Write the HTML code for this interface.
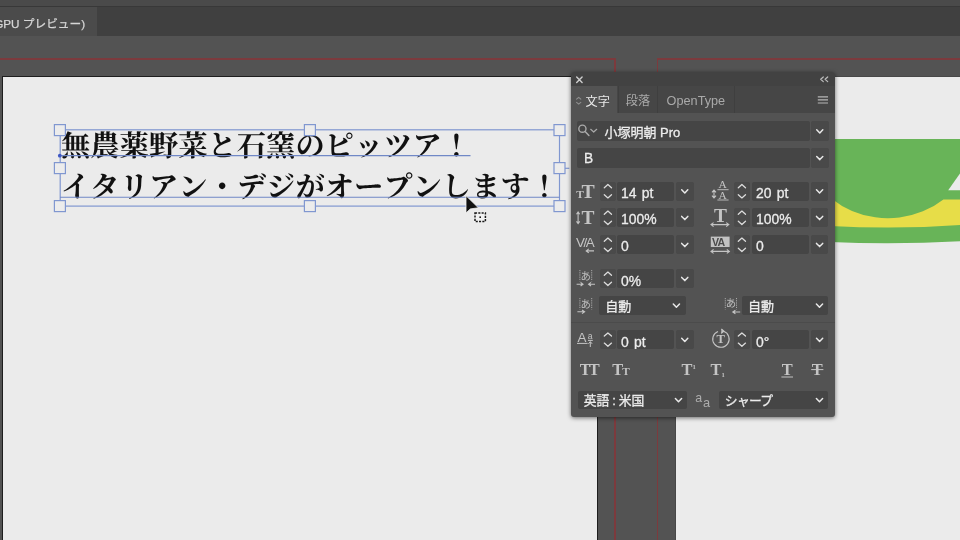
<!DOCTYPE html>
<html lang="ja">
<head>
<meta charset="utf-8">
<title>Illustrator</title>
<style>
html,body{margin:0;padding:0;}
body{width:960px;height:540px;overflow:hidden;position:relative;background:#535353;
  font-family:"Liberation Sans","Noto Sans CJK JP","Noto Sans CJK SC",sans-serif;}
.abs{position:absolute;}
#wrap{position:absolute;left:0;top:0;width:960px;height:540px;will-change:transform;}
svg{position:absolute;overflow:visible;}
/* top bars */
#topstrip{left:0;top:0;width:960px;height:7px;background:#4a4a4a;border-bottom:1px solid #383838;box-sizing:border-box;}
#tabbar{left:0;top:7px;width:960px;height:29px;background:#404040;}
#tab{left:0;top:7px;width:97px;height:29px;background:#4b4b4b;color:#d6d6d6;font-size:11.7px;line-height:33px;white-space:nowrap;overflow:hidden;}
#tab span{position:absolute;left:-5.8px;top:0;-webkit-text-stroke:0.25px #d6d6d6;}
/* artboards */
.art{background:#ebebeb;border:1.6px solid #1e1e1e;box-sizing:border-box;}
#art1{left:2px;top:76px;width:596px;height:470px;}
#art2{left:675px;top:75.6px;width:300px;height:470px;border:1px solid #484848;}
.red{background:#7c3a3d;}
/* text */
.txt{color:#111;font-family:"Liberation Serif","Noto Serif CJK JP","Noto Serif CJK SC",serif;font-weight:700;
  font-size:29.3px;line-height:42px;white-space:nowrap;letter-spacing:0;text-rendering:geometricPrecision;font-kerning:none;font-feature-settings:"kern" 0,"palt" 0;}
.bl{background:#6f8fd8;}
.hd{width:11px;height:11px;border:1px solid #5f82d2;background:#ebebeb;box-sizing:border-box;}
/* panel */
#panel{left:571px;top:72px;width:264px;height:344.5px;background:#535353;border-radius:3px;box-shadow:0 1px 4px rgba(0,0,0,.55);overflow:hidden;}
#panel *{box-sizing:border-box;}
#ptitle{left:0;top:0;width:264px;height:14px;background:#424242;}
#ptabs{left:0;top:14px;width:264px;height:27px;background:#464646;}
.ptab{top:14px;height:27px;font-size:12.2px;line-height:31px;color:#a9a9a9;white-space:nowrap;}
#pt1{left:0;width:46px;background:#535353;color:#eaeaea;}
#pt2{left:47px;width:40px;border-left:1px solid #3f3f3f;border-right:1px solid #3f3f3f;}
#pt3{left:87px;width:77px;border-right:1px solid #3f3f3f;}
.fld{background:#454545;border-radius:2px;color:#ececec;white-space:nowrap;overflow:hidden;}
.ft{position:absolute;white-space:nowrap;transform-origin:0 50%;-webkit-text-stroke:0.3px #ececec;}
.dd{background:#494949;border-radius:2px;}
.sp{background:#4a4a4a;border-radius:2px;}
.ic{color:#bdbdbd;}
</style>
</head>
<body>
<div id="wrap">
<div id="topstrip" class="abs"></div>
<div id="tabbar" class="abs"></div>
<div id="tab" class="abs"><span>GPU プレビュー)</span></div>

<!-- red bleed guides -->
<div class="abs red" style="left:0;top:58px;width:616px;height:2px;"></div>
<div class="abs red" style="left:614.2px;top:58px;width:1.6px;height:490px;"></div>
<div class="abs red" style="left:656.6px;top:58px;width:304px;height:2px;"></div>
<div class="abs red" style="left:656.6px;top:58px;width:1.6px;height:490px;"></div>

<div id="art1" class="abs art"></div>
<div id="art2" class="abs art"></div>

<!-- cup artwork on right artboard -->
<svg class="abs" style="left:0;top:0" width="960" height="540" viewBox="0 0 960 540">
  <path d="M830 190 H960 V241.2 Q897 244.9 830 242.1 Z" fill="#68b458"/>
  <path d="M830 190 H960 V225 Q897 229.6 830 226 Z" fill="#e7dd48"/>
  <path d="M802.5 139 H960 V199.4 H943.4 A85.5 79 0 0 1 802.5 139 Z" fill="#68b458"/>
  <path d="M948.2 190.2 L960.5 172.8 V190.2 Z" fill="#ebebeb"/>
</svg>

<div class="abs txt" style="left:61px;top:126px;">無農薬野菜と石窯のピッツア！</div>
<div class="abs txt" style="left:61px;top:167px;">イタリアン・デジがオープンします！</div>

<!-- selection -->
<svg class="abs" style="left:0;top:0" width="960" height="540" viewBox="0 0 960 540">
  <g fill="none" stroke="#8097d0" stroke-width="1.2">
    <rect x="60.2" y="129.8" width="499.3" height="76.3"/>
    <path d="M60 155.6 H470.5 M60 197.2 H559.5" stroke="#7088c6" stroke-width="1.1"/>
    <path d="M560 168.3 H569.3"/>
  </g>
  <circle cx="59.8" cy="155.7" r="1.9" fill="#3f58c4"/>
  <g fill="#ececec" stroke="#8097d0" stroke-width="1.2">
    <rect x="54.4" y="124.6" width="11" height="11"/>
    <rect x="304.4" y="124.6" width="11" height="11"/>
    <rect x="554" y="124.6" width="11" height="11"/>
    <rect x="54.4" y="162.6" width="11" height="11"/>
    <rect x="554" y="162.6" width="11" height="11"/>
    <rect x="54.4" y="200.6" width="11" height="11"/>
    <rect x="304.4" y="200.6" width="11" height="11"/>
    <rect x="554" y="200.6" width="11" height="11"/>
  </g>
  <!-- cursor -->
  <path d="M466 195.7 V212.9 L470.3 208.9 L478.4 207.8 Z" fill="#111" stroke="#f4f4f4" stroke-width="0.8" stroke-linejoin="round"/>
  <rect x="474.6" y="212.6" width="11" height="9" fill="#f2f2f2" stroke="#f2f2f2" stroke-width="1.6"/>
  <rect x="475" y="213" width="10.4" height="8.4" fill="none" stroke="#1a1a1a" stroke-width="1.5" stroke-dasharray="2.1 1.2"/>
  <rect x="479.4" y="216.4" width="1.6" height="1.6" fill="#1a1a1a"/>
</svg>

<div id="panel" class="abs">
<div id="ptitle" class="abs"></div><div id="ptabs" class="abs"></div>
<div id="pt1" class="abs ptab"><span class="abs" style="left:14.6px;top:0.5px">文字</span></div>
<div id="pt2" class="abs ptab"><span class="abs" style="left:6.8px">段落</span></div>
<div id="pt3" class="abs ptab"><span class="abs" style="left:8.6px;font-size:12.7px">OpenType</span></div>
<div class="abs fld" style="left:6px;top:49.3px;width:233px;height:19.5px;"><span class="ft" style="left:27.5px;top:1.6px;line-height:19.5px;font-size:13px;">小塚明朝 Pro</span></div>
<div class="abs dd" style="left:240px;top:49.3px;height:19.5px;width:17.5px"></div><svg class="abs" style="left:0;top:0" width="1" height="1"><path d="M245.7 57.7 L248.8 60.9 L251.8 57.7" fill="none" stroke="#e8e8e8" stroke-width="1.5" stroke-linecap="round" stroke-linejoin="round"/></svg>
<div class="abs fld" style="left:6px;top:76px;width:233px;height:19.5px;"><span class="ft" style="left:7px;top:1.2px;line-height:19.5px;font-size:14.6px;transform:scaleX(0.94);">B</span></div>
<div class="abs dd" style="left:240px;top:76px;height:19.5px;width:17.5px"></div><svg class="abs" style="left:0;top:0" width="1" height="1"><path d="M245.7 84.5 L248.8 87.6 L251.8 84.5" fill="none" stroke="#e8e8e8" stroke-width="1.5" stroke-linecap="round" stroke-linejoin="round"/></svg>
<div class="abs sp" style="left:29.2px;top:109.6px;height:19px;width:15.8px"></div><svg class="abs" style="left:0;top:0" width="1" height="1"><path d="M33.3 115.7 L36.9 112.5 L40.5 115.7 M33.3 122.7 L36.9 125.9 L40.5 122.7" fill="none" stroke="#dcdcdc" stroke-width="1.3" stroke-linecap="round" stroke-linejoin="round"/></svg><div class="abs fld" style="left:46.3px;top:109.6px;width:57px;height:19px;word-spacing:1.5px;"><span class="ft" style="left:4px;top:2.2px;line-height:19px;font-size:14.8px;transform:scaleX(0.94);">14 pt</span></div><div class="abs dd" style="left:105px;top:109.6px;height:19px;width:17.5px"></div><svg class="abs" style="left:0;top:0" width="1" height="1"><path d="M110.7 117.8 L113.8 121.0 L116.8 117.8" fill="none" stroke="#e8e8e8" stroke-width="1.5" stroke-linecap="round" stroke-linejoin="round"/></svg><div class="abs sp" style="left:163.2px;top:109.6px;height:19px;width:15.8px"></div><svg class="abs" style="left:0;top:0" width="1" height="1"><path d="M167.3 115.7 L170.9 112.5 L174.5 115.7 M167.3 122.7 L170.9 125.9 L174.5 122.7" fill="none" stroke="#dcdcdc" stroke-width="1.3" stroke-linecap="round" stroke-linejoin="round"/></svg><div class="abs fld" style="left:181.2px;top:109.6px;width:57px;height:19px;word-spacing:1.5px;"><span class="ft" style="left:3.5px;top:2.2px;line-height:19px;font-size:14.8px;transform:scaleX(0.94);">20 pt</span></div><div class="abs dd" style="left:239.8px;top:109.6px;height:19px;width:17.5px"></div><svg class="abs" style="left:0;top:0" width="1" height="1"><path d="M245.5 117.8 L248.6 121.0 L251.7 117.8" fill="none" stroke="#e8e8e8" stroke-width="1.5" stroke-linecap="round" stroke-linejoin="round"/></svg>
<div class="abs sp" style="left:29.2px;top:136.2px;height:19px;width:15.8px"></div><svg class="abs" style="left:0;top:0" width="1" height="1"><path d="M33.3 142.3 L36.9 139.1 L40.5 142.3 M33.3 149.3 L36.9 152.5 L40.5 149.3" fill="none" stroke="#dcdcdc" stroke-width="1.3" stroke-linecap="round" stroke-linejoin="round"/></svg><div class="abs fld" style="left:46.3px;top:136.2px;width:57px;height:19px;word-spacing:1.5px;"><span class="ft" style="left:4px;top:2.1px;line-height:19px;font-size:14.8px;transform:scaleX(0.94);">100%</span></div><div class="abs dd" style="left:105px;top:136.2px;height:19px;width:17.5px"></div><svg class="abs" style="left:0;top:0" width="1" height="1"><path d="M110.7 144.4 L113.8 147.6 L116.8 144.4" fill="none" stroke="#e8e8e8" stroke-width="1.5" stroke-linecap="round" stroke-linejoin="round"/></svg><div class="abs sp" style="left:163.2px;top:136.2px;height:19px;width:15.8px"></div><svg class="abs" style="left:0;top:0" width="1" height="1"><path d="M167.3 142.3 L170.9 139.1 L174.5 142.3 M167.3 149.3 L170.9 152.5 L174.5 149.3" fill="none" stroke="#dcdcdc" stroke-width="1.3" stroke-linecap="round" stroke-linejoin="round"/></svg><div class="abs fld" style="left:181.2px;top:136.2px;width:57px;height:19px;word-spacing:1.5px;"><span class="ft" style="left:3.5px;top:2.1px;line-height:19px;font-size:14.8px;transform:scaleX(0.94);">100%</span></div><div class="abs dd" style="left:239.8px;top:136.2px;height:19px;width:17.5px"></div><svg class="abs" style="left:0;top:0" width="1" height="1"><path d="M245.5 144.4 L248.6 147.6 L251.7 144.4" fill="none" stroke="#e8e8e8" stroke-width="1.5" stroke-linecap="round" stroke-linejoin="round"/></svg>
<div class="abs sp" style="left:29.2px;top:163.2px;height:19px;width:15.8px"></div><svg class="abs" style="left:0;top:0" width="1" height="1"><path d="M33.3 169.3 L36.9 166.1 L40.5 169.3 M33.3 176.3 L36.9 179.5 L40.5 176.3" fill="none" stroke="#dcdcdc" stroke-width="1.3" stroke-linecap="round" stroke-linejoin="round"/></svg><div class="abs fld" style="left:46.3px;top:163.2px;width:57px;height:19px;word-spacing:1.5px;"><span class="ft" style="left:4px;top:1.8px;line-height:19px;font-size:14.8px;transform:scaleX(0.94);">0</span></div><div class="abs dd" style="left:105px;top:163.2px;height:19px;width:17.5px"></div><svg class="abs" style="left:0;top:0" width="1" height="1"><path d="M110.7 171.4 L113.8 174.6 L116.8 171.4" fill="none" stroke="#e8e8e8" stroke-width="1.5" stroke-linecap="round" stroke-linejoin="round"/></svg><div class="abs sp" style="left:163.2px;top:163.2px;height:19px;width:15.8px"></div><svg class="abs" style="left:0;top:0" width="1" height="1"><path d="M167.3 169.3 L170.9 166.1 L174.5 169.3 M167.3 176.3 L170.9 179.5 L174.5 176.3" fill="none" stroke="#dcdcdc" stroke-width="1.3" stroke-linecap="round" stroke-linejoin="round"/></svg><div class="abs fld" style="left:181.2px;top:163.2px;width:57px;height:19px;word-spacing:1.5px;"><span class="ft" style="left:3.5px;top:1.8px;line-height:19px;font-size:14.8px;transform:scaleX(0.94);">0</span></div><div class="abs dd" style="left:239.8px;top:163.2px;height:19px;width:17.5px"></div><svg class="abs" style="left:0;top:0" width="1" height="1"><path d="M245.5 171.4 L248.6 174.6 L251.7 171.4" fill="none" stroke="#e8e8e8" stroke-width="1.5" stroke-linecap="round" stroke-linejoin="round"/></svg>
<div class="abs sp" style="left:29.2px;top:197.2px;height:19px;width:15.8px"></div><svg class="abs" style="left:0;top:0" width="1" height="1"><path d="M33.3 203.3 L36.9 200.1 L40.5 203.3 M33.3 210.3 L36.9 213.5 L40.5 210.3" fill="none" stroke="#dcdcdc" stroke-width="1.3" stroke-linecap="round" stroke-linejoin="round"/></svg><div class="abs fld" style="left:46.3px;top:197.2px;width:57px;height:19px;word-spacing:1.5px;"><span class="ft" style="left:4px;top:3.3px;line-height:19px;font-size:14.8px;transform:scaleX(0.94);">0%</span></div><div class="abs dd" style="left:105px;top:197.2px;height:19px;width:17.5px"></div><svg class="abs" style="left:0;top:0" width="1" height="1"><path d="M110.7 205.4 L113.8 208.6 L116.8 205.4" fill="none" stroke="#e8e8e8" stroke-width="1.5" stroke-linecap="round" stroke-linejoin="round"/></svg>
<div class="abs fld" style="left:28.4px;top:224px;width:86.7px;height:19px;"><span class="ft" style="left:5.8px;top:0.9px;line-height:19px;font-size:13px;">自動</span></div><svg class="abs" style="left:0;top:0" width="1" height="1"><path d="M102.3 232.0 L105.4 235.2 L108.5 232.0" fill="none" stroke="#e8e8e8" stroke-width="1.5" stroke-linecap="round" stroke-linejoin="round"/></svg>
<div class="abs fld" style="left:170.7px;top:224px;width:86.6px;height:19px;"><span class="ft" style="left:6.3px;top:0.9px;line-height:19px;font-size:13px;">自動</span></div><svg class="abs" style="left:0;top:0" width="1" height="1"><path d="M245.4 232.0 L248.5 235.2 L251.6 232.0" fill="none" stroke="#e8e8e8" stroke-width="1.5" stroke-linecap="round" stroke-linejoin="round"/></svg>
<div class="abs sp" style="left:29.2px;top:258px;height:19px;width:15.8px"></div><svg class="abs" style="left:0;top:0" width="1" height="1"><path d="M33.3 264.1 L36.9 260.9 L40.5 264.1 M33.3 271.1 L36.9 274.3 L40.5 271.1" fill="none" stroke="#dcdcdc" stroke-width="1.3" stroke-linecap="round" stroke-linejoin="round"/></svg><div class="abs fld" style="left:46.3px;top:258px;width:57px;height:19px;word-spacing:1.5px;"><span class="ft" style="left:4px;top:3.2px;line-height:19px;font-size:14.8px;transform:scaleX(0.94);">0 pt</span></div><div class="abs dd" style="left:105px;top:258px;height:19px;width:17.5px"></div><svg class="abs" style="left:0;top:0" width="1" height="1"><path d="M110.7 266.2 L113.8 269.4 L116.8 266.2" fill="none" stroke="#e8e8e8" stroke-width="1.5" stroke-linecap="round" stroke-linejoin="round"/></svg><div class="abs sp" style="left:163.2px;top:258px;height:19px;width:15.8px"></div><svg class="abs" style="left:0;top:0" width="1" height="1"><path d="M167.3 264.1 L170.9 260.9 L174.5 264.1 M167.3 271.1 L170.9 274.3 L174.5 271.1" fill="none" stroke="#dcdcdc" stroke-width="1.3" stroke-linecap="round" stroke-linejoin="round"/></svg><div class="abs fld" style="left:181.2px;top:258px;width:57px;height:19px;word-spacing:1.5px;"><span class="ft" style="left:3.5px;top:3.2px;line-height:19px;font-size:14.8px;transform:scaleX(0.94);">0°</span></div><div class="abs dd" style="left:239.8px;top:258px;height:19px;width:17.5px"></div><svg class="abs" style="left:0;top:0" width="1" height="1"><path d="M245.5 266.2 L248.6 269.4 L251.7 266.2" fill="none" stroke="#e8e8e8" stroke-width="1.5" stroke-linecap="round" stroke-linejoin="round"/></svg>
<div class="abs fld" style="left:6.7px;top:318.8px;width:109px;height:18.5px;word-spacing:-0.6px;"><span class="ft" style="left:6px;top:1.6px;line-height:18.5px;font-size:12.8px;">英語 : 米国</span></div><svg class="abs" style="left:0;top:0" width="1" height="1"><path d="M104.4 326.6 L107.5 329.8 L110.6 326.6" fill="none" stroke="#e8e8e8" stroke-width="1.5" stroke-linecap="round" stroke-linejoin="round"/></svg>
<div class="abs fld" style="left:148.2px;top:318.8px;width:109px;height:18.5px;letter-spacing:-0.7px;"><span class="ft" style="left:5.6px;top:1.2px;line-height:18.5px;font-size:12.8px;">シャープ</span></div><svg class="abs" style="left:0;top:0" width="1" height="1"><path d="M245.4 326.6 L248.5 329.8 L251.6 326.6" fill="none" stroke="#e8e8e8" stroke-width="1.5" stroke-linecap="round" stroke-linejoin="round"/></svg>
<svg class="abs" id="picons" style="left:0;top:0" width="264" height="344" viewBox="0 0 264 344">
<g fill="none" stroke-linecap="round" stroke-linejoin="round">
  <!-- close x -->
  <path d="M5.7 5.1 L11.1 10.5 M11.1 5.1 L5.7 10.5" stroke="#cfcfcf" stroke-width="1.4"/>
  <!-- collapse << -->
  <path d="M252.3 5 L249.7 7.3 L252.3 9.6 M256.7 5 L254.1 7.3 L256.7 9.6" stroke="#bdbdbd" stroke-width="1.2"/>
  <!-- tab cycle arrows -->
  <path d="M5.6 27.1 L7.7 25.3 L9.8 27.1 M5.6 30.3 L7.7 32.1 L9.8 30.3" stroke="#8f8f8f" stroke-width="1.1"/>
  <!-- hamburger -->
  <path d="M246.8 24.8 H257 M246.8 27.9 H257 M246.8 31 H257" stroke="#b5b5b5" stroke-width="1.2" stroke-linecap="butt"/>
  <!-- magnifier -->
  <circle cx="11.4" cy="56.7" r="3.6" stroke="#a9a9a9" stroke-width="1.4"/>
  <path d="M14.1 59.5 L17.9 63.4" stroke="#a9a9a9" stroke-width="1.5"/>
  <path d="M19.7 57.3 L22.7 60 L25.7 57.3" stroke="#a9a9a9" stroke-width="1.2"/>
</g>
<g fill="#c4c4c4" font-family="'Liberation Serif',serif" font-weight="700">
  <!-- L3 font size -->
  <text x="5.2" y="125.6" font-size="11.4">T</text>
  <text x="10.6" y="125.8" font-size="19.8">T</text>
  <!-- L4 vertical scale -->
  <text x="10.6" y="152.2" font-size="19.4">T</text>
  <!-- R4 horizontal scale -->
  <text x="142.9" y="149.6" font-size="19.4">T</text>
  <!-- R3 leading -->
  <text x="147.4" y="116.4" font-size="11.4" font-weight="400">A</text>
  <text x="147.4" y="126.8" font-size="11.4" font-weight="400">A</text>
  <!-- R8 rotate -->
  <text x="145.6" y="271.2" font-size="12.6">T</text>
</g>
<g fill="none" stroke="#c4c4c4" stroke-width="1.1" stroke-linecap="butt" stroke-linejoin="miter">
  <!-- L4 arrow updown -->
  <path d="M7.1 140.6 V150.8 M5.5 142.2 L7.1 140 L8.7 142.2 M5.5 149.4 L7.1 151.6 L8.7 149.4"/>
  <!-- R3 arrows + underlines -->
  <path d="M143 118.6 V125.2 M141 120.4 L143 118 L145 120.4 M141 123.6 L143 126 L145 123.6"/>
  <path d="M146.4 117.7 H157.6 M146.4 128 H157.6" stroke-width="0.9"/>
  <!-- R4 arrow leftright -->
  <path d="M140.6 152.6 H157.2 M142.6 150.6 L140 152.6 L142.6 154.6 M155.2 150.6 L157.8 152.6 L155.2 154.6"/>
  <!-- R5 arrow leftright -->
  <path d="M140.6 179.4 H157.8 M142.6 177.4 L140 179.4 L142.6 181.4 M155.8 177.4 L158.4 179.4 L155.8 181.4"/>
  <!-- L5 arrow left -->
  <path d="M15.6 178.9 H23 M17.8 176.9 L15.2 178.9 L17.8 180.9"/>
  <!-- L6 tsume arrows -->
  <path d="M5.6 212.2 H11.4 M9.6 210.4 L12 212.2 L9.6 214 M24 212.2 H18.2 M20 210.4 L17.6 212.2 L20 214"/>
  <!-- L7 arrow right -->
  <path d="M6.4 239.8 H13 M11 238 L13.6 239.8 L11 241.6"/>
  <!-- R7 arrow left -->
  <path d="M169.2 240 H162.4 M164.4 238.2 L161.8 240 L164.4 241.8"/>
  <!-- L8 underline + arrow -->
  <path d="M6 271.4 H16.6 M17 268.4 H21.8 M19.3 275 V270 M17.5 271.8 L19.3 269.6 L21.1 271.8" stroke-width="1"/>
  <!-- dotted bars -->
  <path d="M8.9 198 V209.4 M20.7 198 V209.4 M8.9 226 V237.4 M20.7 226 V237.4 M154.3 226 V237.4 M165.5 226 V237.4" stroke="#a8a8a8" stroke-width="1" stroke-dasharray="1.2 1"/>
  <!-- R8 circle -->
  <path d="M152.6 259.3 A8.2 8.2 0 1 1 147 259.4" stroke-width="1.1"/>
  <path d="M150.4 257 L153 259.3 L150.2 261.4" stroke-width="1.1" fill="#c4c4c4"/>
  <!-- row 9 underline / strike -->
  <path d="M210.4 305 H222 M240.2 297.6 H252.4" stroke-width="1"/>
</g>
<!-- R5 tracking box -->
<rect x="139.8" y="164.6" width="18.8" height="10.4" fill="#c2c2c2"/>
<text x="141" y="173.6" font-family="'Liberation Sans',sans-serif" font-weight="700" font-size="10.6" fill="#4a4a4a" letter-spacing="-0.9">VA</text>
<g fill="#c4c4c4" font-family="'Liberation Sans',sans-serif">
  <!-- L5 kerning -->
  <text x="5" y="175.2" font-size="13.4" letter-spacing="-1.5">V/A</text>
  <!-- L8 baseline shift -->
  <text x="6.6" y="270.2" font-size="13.4">A</text>
  <text x="16.8" y="267.4" font-size="8.6">a</text>
  <!-- aa -->
  <text x="124.2" y="330.4" font-size="12.4" fill="#adadad">a</text>
  <text x="132" y="334.8" font-size="12.8" fill="#adadad">a</text>
</g>
<g fill="#bdbdbd" font-family="'Noto Sans CJK JP','Noto Sans CJK SC',sans-serif" font-size="10.4">
  <text x="9.6" y="208.2">あ</text>
  <text x="9.6" y="235.8">あ</text>
  <text x="154.8" y="235.2">あ</text>
</g>
<g fill="#c4c4c4" font-family="'Liberation Serif',serif" font-weight="700" font-size="16.4">
  <text x="8.8" y="303.3" letter-spacing="-1.9">TT</text>
  <text x="41.2" y="303.3">T</text><text x="51.2" y="303.3" font-size="11.2">T</text>
  <text x="110.4" y="303.3">T</text><text x="121.6" y="296.6" font-size="6.6">1</text>
  <text x="139.4" y="303.3">T</text><text x="150.4" y="304.6" font-size="6.6">1</text>
  <text x="210.8" y="302.8">T</text>
  <text x="240.8" y="303.3">T</text>
</g>
</svg>
<div class="abs" style="left:0;top:249.5px;width:264px;height:1px;background:#4b4b4b"></div>
</div>
</div>
</body>
</html>
